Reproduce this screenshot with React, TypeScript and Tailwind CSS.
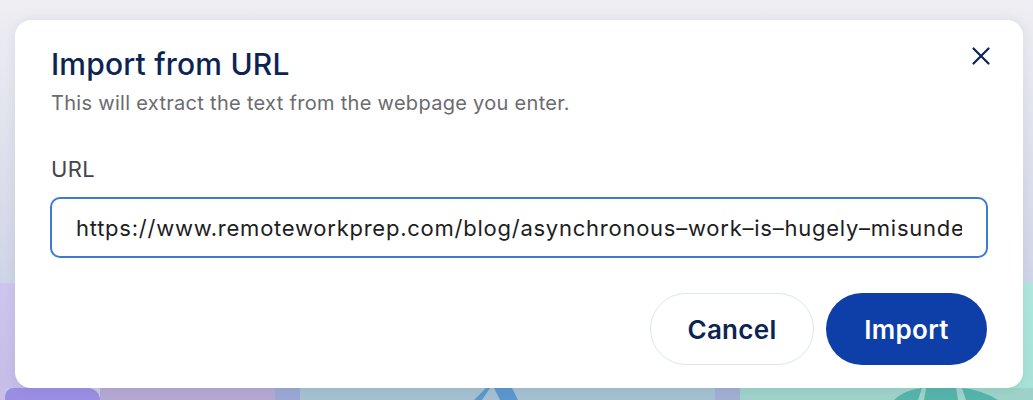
export default function App() {
  return (
    <div className="relative h-[400px] w-[1033px] overflow-hidden font-['Inter',sans-serif]">
      {/* page behind the overlay */}
      <div className="flex h-full flex-col bg-gradient-to-b from-[#eeeef3] via-[#d9dcea] to-[#c0cae6]">
        <div className="h-[283px]" />
        <div className="flex flex-1">
          <div className="w-[300px] bg-gradient-to-b from-[#cec6ee] to-[#c6bde8]" />
          <div className="flex-1 bg-[#bcc6e2]" />
          <div className="w-[300px] bg-gradient-to-b from-[#aee8dc] to-[#a6e2d6]" />
        </div>
        <div className="flex h-[12px]">
          <div className="w-[5px] bg-[#c8c0e8]" />
          <div className="w-[95px] rounded-tl-[14px] rounded-tr-[20px] bg-[#9a8ee2]" />
          <div className="w-[175px] bg-[#b4a8d2]" />
          <div className="w-[25px] bg-[#98a8d2]" />
          <div className="relative w-[415px] bg-[#a4c0d0]">
            <svg className="absolute left-[172px] top-0" width="70" height="12" viewBox="0 0 70 12">
              <path d="M2 12 L14 0 L18 0 L10 12 Z" fill="#5b97cc" />
              <path d="M22 0 L40 0 L46 12 L28 12 Z" fill="#5b97cc" />
            </svg>
          </div>
          <div className="w-[25px] bg-[#a0aed2]" />
          <div className="relative flex-1 bg-[#9dd2c8]">
            <svg className="absolute left-[150px] top-0" width="120" height="12" viewBox="0 0 120 12">
              <path d="M4 12 Q14 2 32 0 L28 12 Z" fill="#55b4aa" />
              <path d="M36 0 L66 0 L68 12 L34 12 Z" fill="#55b4aa" />
              <path d="M72 0 Q92 2 108 12 L76 12 Z" fill="#55b4aa" />
            </svg>
          </div>
        </div>
      </div>

      {/* dialog */}
      <div className="absolute left-[15px] top-[20px] w-[1008px] rounded-[16px] bg-white px-[36px] pb-[23px] pt-[26px] shadow-[0_0_12px_rgba(40,50,90,0.08)]">
        <button className="absolute right-[33px] top-[27px] flex h-[18px] w-[18px] items-center justify-center">
          <svg width="18" height="18" viewBox="0 0 18 18" fill="none" stroke="#0b2452" strokeWidth="2.2" strokeLinecap="round">
            <path d="M1.5 1.5 L16.5 16.5 M16.5 1.5 L1.5 16.5" />
          </svg>
        </button>

        <h2 className="text-[30px] leading-[36px] font-medium tracking-[0.2px] text-[#0b2452]">Import from URL</h2>
        <p className="mt-[7px] text-[20px] leading-[28px] tracking-[0.3px] text-[#6b6b70]">
          This will extract the text from the webpage you enter.
        </p>

        <label className="mt-[38px] block text-[22px] leading-[28px] tracking-[0.3px] text-[#45454a]">URL</label>
        <input
          readOnly
          value="https://www.remoteworkprep.com/blog/asynchronous–work–is–hugely–misunderstood"
          className="mt-[14px] -ml-[1px] block h-[61px] w-[938px] rounded-[10px] border-2 border-[#3b7ad6] px-[24px] text-[22px] tracking-[0.75px] text-[#1d1d22] outline-none"
        />

        <div className="mt-[35px] flex justify-end gap-[12px]">
          <button className="h-[72px] w-[164px] rounded-full border border-[#dce6f1] text-[26px] font-semibold tracking-[0.3px] text-[#0b2452]">
            Cancel
          </button>
          <button className="h-[72px] w-[161px] rounded-full bg-[#0e3fa8] text-[26px] font-semibold tracking-[0.3px] text-white">
            Import
          </button>
        </div>
      </div>
    </div>
  )
}
